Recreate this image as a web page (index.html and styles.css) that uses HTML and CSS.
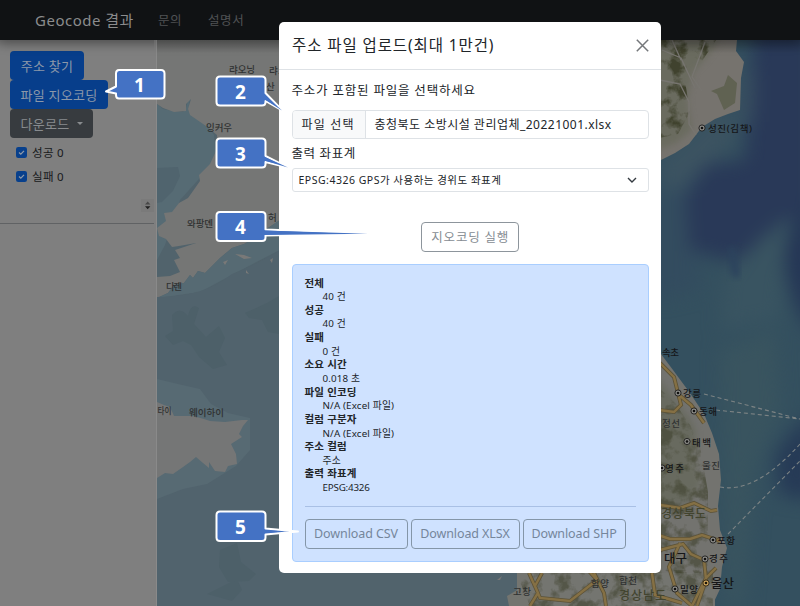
FILE: index.html
```html
<!DOCTYPE html>
<html lang="ko">
<head>
<meta charset="utf-8">
<title>Geocode 결과</title>
<link rel="stylesheet" href="styles.css">
</head>
<body>
<div class="page">
  <header class="navbar">
    <span class="brand">Geocode 결과</span>
    <a class="nav-link">문의</a>
    <a class="nav-link nav-guide">설명서</a>
  </header>
  <div class="main">
    <aside class="sidebar">
      <div class="panel">
        <button class="btn primary find">주소 찾기</button>
        <button class="btn primary file">파일 지오코딩</button>
        <button class="btn secondary">다운로드<i class="caret"></i></button>
        <label class="check"><svg viewBox="0 0 11 11"><rect width="11" height="11" rx="2.2"/><path d="M3 5.6 4.8 7.2 8 3.9"/></svg><span>성공 0</span></label>
        <label class="check"><svg viewBox="0 0 11 11"><rect width="11" height="11" rx="2.2"/><path d="M3 5.6 4.8 7.2 8 3.9"/></svg><span>실패 0</span></label>
        <svg class="spin" viewBox="0 0 13 13"><rect width="13" height="13" fill="#7a7a7a"/><path d="M4 5.5 6.7 2.5 9.4 5.5z" fill="#484848"/><path d="M4 7.3 6.7 10.3 9.4 7.3z" fill="#202020"/></svg>
      </div>
    </aside>
    <svg class="map" viewBox="157 40 643 566" preserveAspectRatio="none">
      <defs>
        <filter id="b3" color-interpolation-filters="sRGB"><feGaussianBlur stdDeviation="3"/></filter>
        <filter id="b10" x="-50%" y="-50%" width="200%" height="200%" color-interpolation-filters="sRGB"><feGaussianBlur stdDeviation="9"/></filter>
        <filter id="relief" x="0" y="0" width="100%" height="100%" color-interpolation-filters="sRGB">
          <feTurbulence type="fractalNoise" baseFrequency="0.07" numOctaves="4" seed="8"/>
          <feColorMatrix values="0 0 0 0 .25  0 0 0 0 .26  0 0 0 0 .18  4 0 0 0 -1.8"/>
          <feComposite in2="SourceGraphic" operator="in"/>
        </filter>
        <linearGradient id="shade" x1="0" y1="0" x2="0" y2="1"><stop offset="0" stop-color="#000" stop-opacity=".2"/><stop offset="1" stop-color="#000" stop-opacity="0"/></linearGradient>
        <g id="city"><circle r="3.1" fill="#8b8b87" stroke="#1c1c1c" stroke-width=".9"/><circle r="1.3" fill="#111"/></g>
      </defs>
      <rect x="157" y="40" width="503" height="566" fill="#51636c"/>
      <path d="M157 104 163 109 173 111 183 112 186 108 188 99 190 98 189 106 188 110 194 114 202 119 214 135 216 160 180 200 165 245 157 260z" fill="#566b74"/>
      <path d="M157 168 178 167 180 176 173 191 162 202 157 203z" fill="#50646e"/>
      <path d="M157 40H280V220L268 228 255 238 244 244 232 248 220 258 205 273 198 271 193 278 190 275 184 283 174 285 168 293 157 298V277L170 276 180 272 177 266 174 260 180 258 175 250 196 243 179 246 172 247 166 239 159 236 157 228 166 221 164 213 172 212 179 203 188 198 193 191 200 181 199 175 210 164 216 151 217 135 206 126 190 115 188 109 191 99 186 104 186 111 174 112 163 108 157 104z" fill="#757675"/>
      <path d="M280 220 268 228 255 238 244 244 232 248 220 258 205 273 198 271 193 278 190 275 184 283 174 285 168 293 157 298 200 292Q240 270 280 250z" fill="#566a73"/>
      <path d="M157 297Q205 297 232 274 258 264 280 250V600H157z" fill="#51636d"/>
      <path d="M172 315q8-9 16 1 3-14 11-8l-5 16 12 13 13-11 6 12-6 14 8 13-14 4-14-12-8-12-8-4-10 4-8-9 8-5zM245 313l22-10 12-7v38l-11-2-6-12-13-2zM220 550l17-7 4 19 15 12-7 7-21 1-9-15zM207 594l30-15 5 11-10 11z" fill="#4d6069"/>
      <path d="M157 379 178 384 200 389 211 404 228 413 250 418 250 450 236 466 207 484 183 489 157 499z" fill="#576a73"/>
      <path d="M157 402 164 405 170 407 174 416 193 416 204 419 210 421 225 422 242 420 248 420 243 426 239 434 242 437 231 444 236 454 237 464 228 466 225 472 215 471 209 462 209 468 203 463 196 457 190 462 183 467 173 474 165 473 157 478z" fill="#757676"/>
      <path d="m235 254 9 1 8 3-8 1zm-12 8 5-2-3 5zm23 8 3 4-3-1zm24-10 3-2-1 5z" fill="#797978"/>

      <rect x="655" y="40" width="145" height="566" fill="#34505f"/>
      <g filter="url(#b10)">
        <path d="M655 190 690 165 700 290 655 300z" fill="#334c5f"/>
        <path d="M755 20H815V210L770 235 735 262 690 250 685 200 705 165 745 160z" fill="#293958"/>
        <path d="M780 250 815 190V340L796 305z" fill="#243555"/>
        <path d="M725 275 760 240 790 215 780 320 720 330z" fill="#395461"/>
        <path d="M775 455 790 435 815 410V500L780 495z" fill="#263a56"/>
        <path d="M720 350 775 330 780 410 755 470 745 606 725 606z" fill="#39545f"/>
        <path d="M745 60 755 75 753 125 735 115z" fill="#394f60"/>
        <path d="M655 170 715 110 740 125 725 150 670 195z" fill="#3c5361"/>
      </g>
      <path d="M728 248q8-5 8 5l4 22q-3 6-8 0z" fill="#2c435d" filter="url(#b3)"/>
      <path d="M655 40H737L736 51 744 62 741 78 740 110 728 114 715 119 702 127 689 144 675 153 655 163z" fill="#76736e"/>
      <path d="M655 40H720L706 58 693 72 687 100 692 130 676 143 655 151z" fill="#6a6b5f" filter="url(#b3)"/>
      <path d="M655 40H716L700 64 684 75 690 112 678 134 655 139z" fill="#fff" filter="url(#relief)"/>
      <path d="m660 80 20 4 9 18 0 22 7 11M662 50l19 8 14 30M672 40l9 20M705 42l-13 35 10 14" fill="none" stroke="#777570" stroke-width="1.3"/>
      <path d="m728 75 9 8-2 20-11 7-7-16-6-3 13-5z" fill="#606252"/>
      <path d="M655 346 673 370 690 393 704 414 712 433 719 454 721 480 718 506 720 530 727 548 722 567 720 589 712 606H655z" fill="#73736f"/>
      <path d="M655 374 676 401 690 419 696 431 694 460 701 482 688 504 660 506V606H655z" fill="#686a5f" filter="url(#b3)"/>
      <path d="M655 384 675 403 690 425 700 446 708 492 708 575 694 606H655z" fill="#fff" filter="url(#relief)" opacity=".6"/>
      <path d="M517 573H715V606H509L507 596 517 590z" fill="#747570"/>
      <path d="M515 570H713V606H530z" fill="#fff" filter="url(#relief)" opacity=".6"/>
      <path d="M497 580 502 576 500 580z" fill="#777"/>
      <g fill="none" stroke="#5c5237" stroke-width="4">
        <path d="m660 363 14 14 7 28-7 7-15-2M679 395l12 10 13 18M660 505l20 3 14-5 17 8 6-1M655 534l15 5 20 0 12-4 18 6M660 550l23-6 8 10 13 6 2 20-9 26M680 543l-11 24 8 26 15 13 14-28 10-10M529 573l9 20-8 13M542 573l-7 13 5 12 30 3 27-21-9-10M594 573l10 20 2 13M652 573l3 22 27 8"/>
      </g>
      <g fill="none" stroke="#857044" stroke-width="2.4">
        <path d="m660 363 14 14 7 28-7 7-15-2M679 395l12 10 13 18M660 505l20 3 14-5 17 8 6-1M655 534l15 5 20 0 12-4 18 6M660 550l23-6 8 10 13 6 2 20-9 26M680 543l-11 24 8 26 15 13 14-28 10-10M529 573l9 20-8 13M542 573l-7 13 5 12 30 3 27-21-9-10M594 573l10 20 2 13M652 573l3 22 27 8"/>
      </g>
      <g fill="none" stroke="#7c8384" stroke-width="1.1" stroke-dasharray="4 3"><path d="M704 394 800 419M716 410l84 9M720 487q35 7 80-43M728 534l72-73"/></g>
      <g class="labels">
        <text x="229" y="73" textLength="26">랴오닝</text><text x="269" y="74" textLength="18">랴오</text><text x="266" y="90">산</text>
        <text x="206" y="131" textLength="26">잉커우</text><text x="187" y="227" textLength="26">와팡뎬</text><text x="268" y="221">허</text>
        <text x="166" y="290" textLength="16">다롄</text><text x="157.500" y="414" textLength="14" lengthAdjust="spacingAndGlyphs">타이</text><text x="189" y="416" textLength="35">웨이하이</text>
        <g class="dark">
          <text x="708" y="132" textLength="44">성진(김책)</text><text x="662" y="356" textLength="17">속초</text><text x="683" y="397" textLength="18">강릉</text><text x="699" y="415" textLength="18">동해</text>
          <text x="692" y="446" textLength="19">태백</text><text x="665" y="472" textLength="19">영주</text><text x="717" y="544" textLength="18">포항</text><text x="709" y="562" textLength="19">경주</text><text x="680" y="593" textLength="18">밀양</text>
          <text class="big" x="664" y="563" textLength="23">대구</text><text class="big" x="711" y="588" textLength="23">울산</text>
        </g>
        <text x="662" y="427" textLength="18">정선</text><text x="702" y="469" textLength="18">울진</text><text x="513" y="595" textLength="18">고창</text><text x="591" y="587" textLength="18">함양</text><text x="619" y="584" textLength="18">합천</text>
        <g class="province"><text x="661" y="518" textLength="45">경상북도</text><text x="619" y="600" textLength="47">경상남도</text></g>
      </g>
      <use href="#city" x="702" y="128"/><use href="#city" x="678" y="393"/><use href="#city" x="694" y="411"/><use href="#city" x="687" y="441.500"/><use href="#city" x="662" y="468"/><use href="#city" x="713" y="540"/><use href="#city" x="705" y="559"/><use href="#city" x="675" y="589"/><g class="metro"><use href="#city" x="706" y="583"/></g>
      <rect x="157" y="40" width="643" height="13" fill="url(#shade)"/>
    </svg>
  </div>
</div>

<div class="modal">
  <div class="modal-header">
    <h1>주소 파일 업로드(최대 1만건)</h1>
    <svg class="close" viewBox="0 0 13 13"><path d="M.8.8 12.200 12.200M12.200.8.8 12.200"/></svg>
  </div>
  <div class="modal-body">
    <div class="label choose">주소가 포함된 파일을 선택하세요</div>
    <div class="file-input"><span class="pick">파일 선택</span><span class="filename">충청북도 소방시설 관리업체_20221001.xlsx</span></div>
    <div class="label crs">출력 좌표계</div>
    <div class="select"><span>EPSG:4326 GPS가 사용하는 경위도 좌표계</span><svg viewBox="0 0 10 6"><path d="M1 1 5 5 9 1"/></svg></div>
    <button class="outline run">지오코딩 실행</button>
    <section class="result">
      <dl>
        <dt>전체</dt><dd>40 건</dd>
        <dt>성공</dt><dd>40 건</dd>
        <dt>실패</dt><dd>0 건</dd>
        <dt>소요 시간</dt><dd>0.018 초</dd>
        <dt>파일 인코딩</dt><dd>N/A (Excel 파일)</dd>
        <dt>컬럼 구분자</dt><dd>N/A (Excel 파일)</dd>
        <dt>주소 컬럼</dt><dd>주소</dd>
        <dt>출력 좌표계</dt><dd class="code">EPSG:4326</dd>
      </dl>
      <div class="downloads">
        <button class="outline csv">Download CSV</button>
        <button class="outline xlsx">Download XLSX</button>
        <button class="outline shp">Download SHP</button>
      </div>
    </section>
  </div>
</div>

<svg class="callouts" viewBox="0 0 800 606">
  <path d="M119 70H161Q164.500 70 164.500 73.500V95Q164.500 98.500 161 98.500H119Q116 98.500 116 95V93.500L106 91.500 116 86.500V73.500Q116 70 119 70z"/>
  <path d="M220 76.500H262Q265.500 76.500 265.500 80V93L283 111 265.500 101V102Q265.500 105.500 262 105.500H220Q216.500 105.500 216.500 102V80Q216.500 76.500 220 76.500z"/>
  <path d="M220 138.500H262Q265.500 138.500 265.500 142V156L288 167.500 265.500 162V164Q265.500 167.500 262 167.500H220Q216.500 167.500 216.500 164V142Q216.500 138.500 220 138.500z"/>
  <path d="M220 212H262Q265.500 212 265.500 215.500V229.500L367 233.500 265.500 235.500V237.500Q265.500 241 262 241H220Q216.500 241 216.500 237.500V215.500Q216.500 212 220 212z"/>
  <path d="M220 511.500H262Q265.500 511.500 265.500 515V528.500L298 531.500 265.500 534.500V537.500Q265.500 541 262 541H220Q216.500 541 216.500 537.500V515Q216.500 511.500 220 511.500z"/>
  <path class="tail" d="M264 94 282 110.500 264 99zM264 156.500 288 167.500 264 160.500zM264 230.500 368 233.800 264 235zM264 530 284 531.500 264 533z"/>
  <text x="139.500" y="91.500">1</text><text x="240.500" y="98.500">2</text><text x="240.500" y="161">3</text><text x="240.500" y="234">4</text><text x="240.500" y="534">5</text>
</svg>
</body>
</html>
```
FILE: styles.css
```css
* { box-sizing: border-box; }
body {
  margin: 0;
  width: 800px;
  height: 606px;
  overflow: hidden;
  position: relative;
  font-family: "Noto Sans", "Noto Sans CJK KR", sans-serif;
  font-size: 12px;
  color: #212529;
}
button { font: inherit; margin: 0; padding: 0; }
.page { display: flex; flex-direction: column; height: 606px; background: #7f7f7f; }
.navbar {
  height: 40px;
  flex: none;
  display: flex;
  align-items: center;
  padding: 0 0 1px 35px;
  background: #101214;
  color: #8b8c8d;
  position: relative;
  box-shadow: 0 5px 10px rgba(0, 0, 0, .22);
}
.brand { font-size: 15px; letter-spacing: .5px; width: 123px; white-space: nowrap; }
.nav-link { width: 50px; font-size: 12.500px; letter-spacing: .6px; color: #505254; }
.main { display: flex; flex: 1; min-height: 0; }
.sidebar { width: 157px; flex: none; border-right: 1px solid #8a8a8a; background: #7f7f7f; }
.panel {
  height: 184px;
  width: 154px;
  border-bottom: 1px solid #606264;
  padding: 11px 0 0 10px;
  display: flex;
  flex-direction: column;
  align-items: flex-start;
  box-shadow: inset 0 12px 10px -10px rgba(0, 0, 0, .2);
}
.btn { height: 29px; border: 0; border-radius: 4px; padding-bottom: 1px; color: #8b98a9; font-size: 13px; letter-spacing: .3px; white-space: nowrap; flex: none; }
.primary { background: #073e8b; }
.find { width: 74px; }
.file { width: 98px; }
.secondary { width: 83px; background: #373b3f; color: #888b8e; display: flex; align-items: center; justify-content: center; gap: 7px; }
.caret { border: 3.500px solid transparent; border-top-color: #888b8e; border-bottom: 0; }
.check { height: 24px; padding-left: 6px; display: flex; align-items: center; gap: 5px; color: #17191b; font-size: 11.500px; letter-spacing: .3px; }
.check svg { width: 11px; height: 11px; fill: #08408c; }
.check path { fill: none; stroke: #909aa8; stroke-width: 1.300; }
.check:first-of-type { margin-top: 2px; }
.spin { width: 13px; height: 13px; align-self: flex-end; margin-top: 11px; }
.map { flex: 1; height: 566px; display: block; min-width: 0; }
.labels text { font-size: 9.500px; font-weight: 500; fill: #303232; }
.labels .dark text { fill: #151618; }
.labels .dark .big { font-size: 12.500px; }
.labels .province text { font-size: 12px; fill: #42442f; }

.modal {
  position: absolute;
  left: 279px;
  top: 22px;
  width: 382px;
  height: 551px;
  background: #fff;
  border-radius: 5px;
}
.modal-header {
  height: 48px;
  border-bottom: 1px solid #dee2e6;
  padding: 0 12px 0 13px;
  display: flex;
  align-items: center;
  justify-content: space-between;
}
h1 { margin: 0 0 2px; font-size: 15.500px; font-weight: 400; letter-spacing: .9px; white-space: nowrap; }
.close { width: 13px; height: 13px; fill: none; stroke: #74777a; stroke-width: 1.500; }
.modal-body { padding: 11px 12px 0 12.500px; display: flex; flex-direction: column; }
.label { font-size: 12.500px; height: 20px; line-height: 20px; letter-spacing: .8px; white-space: nowrap; }
.file-input {
  height: 29px;
  margin-top: 9px;
  border: 1px solid #dee2e6;
  border-radius: 4px;
  display: flex;
  overflow: hidden;
  font-size: 12px;
  line-height: 27px;
  white-space: nowrap;
}
.pick { width: 73px; background: #f8f9fa; border-right: 1px solid #dee2e6; padding-left: 9px; letter-spacing: 1.200px; }
.filename { padding-left: 9px; letter-spacing: .48px; }
.crs { margin-top: 5px; letter-spacing: .6px; }
.select {
  height: 24px;
  margin-top: 4px;
  border: 1px solid #dee2e6;
  border-radius: 3px;
  padding: 0 11px 1px 6px;
  display: flex;
  align-items: center;
  justify-content: space-between;
  font-size: 10.500px;
  letter-spacing: .5px;
  white-space: nowrap;
}
.select svg { width: 10px; height: 6px; fill: none; stroke: #343a40; stroke-width: 1.400; }
.outline { height: 30px; background: transparent; border: 1px solid #8d959c; border-radius: 4px; color: #858c92; font-size: 12.500px; white-space: nowrap; }
.run { width: 98px; align-self: center; margin-top: 30px; padding-bottom: 1px; letter-spacing: .8px; }
.result {
  height: 298px;
  margin-top: 11.500px;
  background: #cfe2ff;
  border: 1px solid #a9ceff;
  border-radius: 4px;
  padding: 12px 12px 0;
}
dl { margin: 0; height: 230px; border-bottom: 1px solid #a9c0e5; }
dt, dd { height: 13.650px; line-height: 13.650px; white-space: nowrap; }
dt { font-size: 10.500px; font-weight: 700; letter-spacing: .2px; }
dd { font-size: 9.800px; margin-left: 18px; letter-spacing: .15px; }
.code { letter-spacing: -.2px; }
.downloads { display: flex; gap: 3px; margin-top: 12px; }
.downloads .outline { color: #75869b; border-color: #8496a8; letter-spacing: -.1px; }
.csv { width: 103px; }
.xlsx { width: 109px; }
.shp { width: 103px; }
.callouts { position: absolute; left: 0; top: 0; width: 800px; height: 606px; pointer-events: none; }
.callouts path { fill: #4472c4; stroke: #fff; stroke-width: 2; stroke-linejoin: round; }
.callouts .tail { stroke: none; }
.callouts text { fill: #fff; font-size: 19px; font-weight: 700; text-anchor: middle; }
.metro { filter: sepia(1) saturate(2); }
```
